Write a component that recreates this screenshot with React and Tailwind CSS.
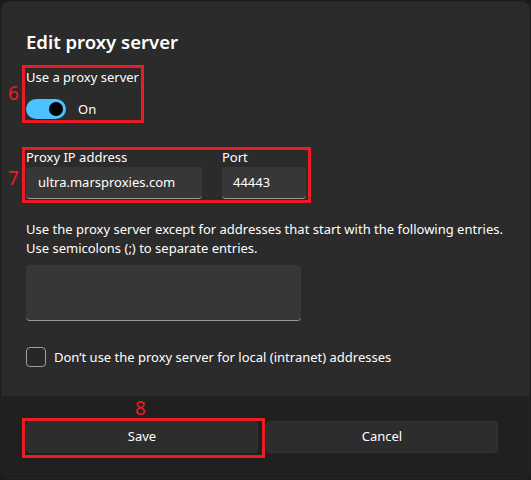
export default function App() {
  return (
    <div className="relative h-[480px] w-[531px] overflow-hidden bg-[#1c1c1c] font-['Noto_Sans',sans-serif] text-white">
      <div className="ml-[1px] mt-[1px] flex h-[478px] w-[529px] flex-col overflow-hidden rounded-lg border border-[#262626] bg-[#2b2b2b]">
        <div className="flex-1 px-[24px] pt-[26px]">
          <h1 className="h-[28px] text-[18.5px] font-semibold leading-[28px]">Edit proxy server</h1>

          <p className="mt-[11px] h-5 text-[13px] leading-5">Use a proxy server</p>
          <div className="mt-[12px] flex items-center gap-3">
            <div className="flex h-5 w-10 items-center justify-end rounded-full bg-[#4cc2ff] pr-[3px]">
              <div className="h-[14px] w-[14px] rounded-full bg-black" />
            </div>
            <span className="text-[13px] leading-5">On</span>
          </div>

          <div className="mt-[28px] flex gap-5">
            <div className="flex w-[176px] flex-col">
              <span className="h-5 text-[13px] leading-5">Proxy IP address</span>
              <div className="flex h-8 items-center rounded border-b border-[#9a9a9a] bg-[#373737] px-3 text-[13px]">
                ultra.marsproxies.com
              </div>
            </div>
            <div className="flex w-[84px] flex-col">
              <span className="h-5 text-[13px] leading-5">Port</span>
              <div className="flex h-8 items-center rounded border-b border-[#9a9a9a] bg-[#373737] px-[11px] text-[13px]">
                44443
              </div>
            </div>
          </div>

          <p className="mt-[21px] whitespace-nowrap text-[13px] leading-[19px]">
            Use the proxy server except for addresses that start with the following entries.
            <br />
            Use semicolons (;) to separate entries.
          </p>
          <div className="mt-[7px] h-[56px] w-[275px] rounded border-b border-[#9a9a9a] bg-[#373737]" />

          <label className="mt-[26px] flex items-center gap-2">
            <span className="h-5 w-5 rounded border border-[#a0a0a0] bg-[#272727]" />
            <span className="text-[13px] leading-5">Don’t use the proxy server for local (intranet) addresses</span>
          </label>
        </div>

        <div className="flex h-[82px] gap-2 bg-[#202020] px-[24px] pt-[25px]">
          <button className="h-8 w-[232px] rounded border border-[#333333] bg-[#2d2d2d] text-[13px] text-white">Save</button>
          <button className="h-8 w-[232px] rounded border border-[#333333] bg-[#2d2d2d] text-[13px] text-white">Cancel</button>
        </div>
      </div>

      {/* annotation overlays */}
      <div className="pointer-events-none absolute left-[22px] top-[65px] h-[58px] w-[122px] border-[3px] border-[#ec1c24]" />
      <span className="absolute left-[8px] top-[81px] text-[19px] leading-6 text-[#ec1c24]">6</span>
      <div className="pointer-events-none absolute left-[22px] top-[147px] h-[56px] w-[289px] border-[3px] border-[#ec1c24]" />
      <span className="absolute left-[8px] top-[166px] text-[19px] leading-6 text-[#ec1c24]">7</span>
      <div className="pointer-events-none absolute left-[22px] top-[418px] h-[40px] w-[243px] border-[3px] border-[#ec1c24]" />
      <span className="absolute left-[135px] top-[396px] text-[19px] leading-6 text-[#ec1c24]">8</span>
    </div>
  );
}
